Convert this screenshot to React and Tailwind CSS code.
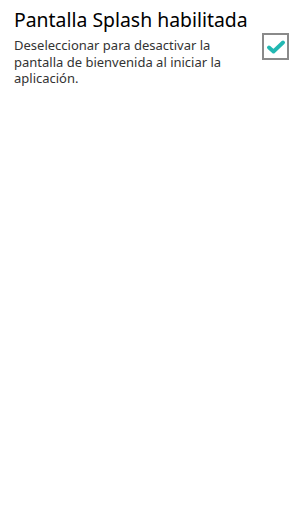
import React from "react";

export default function App() {
  return (
    <div className="w-[307px] h-[512px] bg-white" style={{ fontFamily: '"Noto Sans", "Open Sans", sans-serif' }}>
      <div className="flex items-start pl-[14px] pt-[5px]">
        <div className="w-[240px]">
          <div className="text-[19.4px] leading-[30px] text-black whitespace-nowrap">Pantalla Splash habilitada</div>
          <div className="mt-[2px] text-[13px] leading-[16.5px] text-[#333333]">
            Deseleccionar para desactivar la pantalla de bienvenida al iniciar la aplicación.
          </div>
        </div>
        <div className="ml-[8px] mt-[28px] h-[27px] w-[27px] border-2 border-[#8a8a8a] flex items-center justify-center">
          <svg width="18" height="14" viewBox="0 0 18 14">
            <path d="M2 7.5 L6.5 11.5 L16 2.5" fill="none" stroke="#22b8b2" strokeWidth="3.8" strokeLinecap="round" strokeLinejoin="round" />
          </svg>
        </div>
      </div>
    </div>
  );
}
